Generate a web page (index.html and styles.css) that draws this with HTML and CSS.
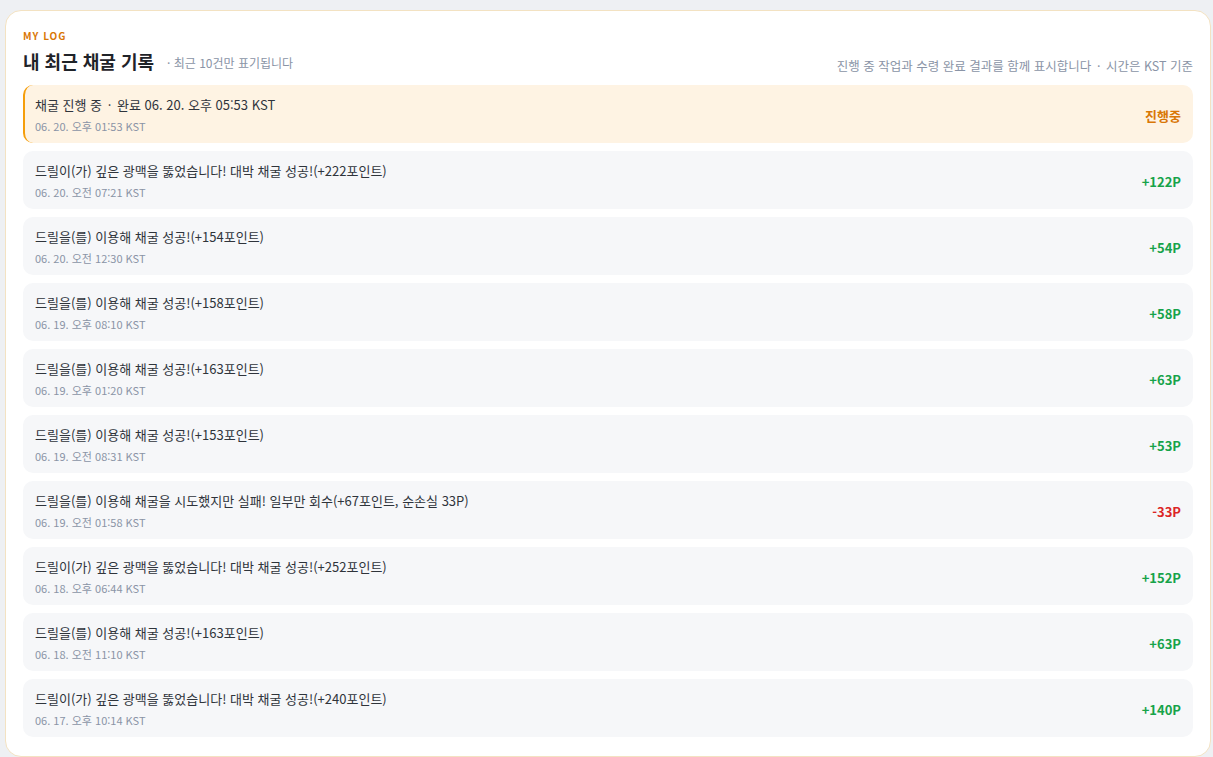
FILE: index.html
```html
<!DOCTYPE html>
<html lang="ko">
<head>
  <meta charset="UTF-8">
  <meta name="viewport" content="width=device-width, initial-scale=1.0">
  <title>내 최근 채굴 기록</title>
  <link rel="stylesheet" href="styles.css">
</head>
<body>
  <section class="log-card">
    <div class="log-eyebrow">MY LOG</div>
    <div class="log-head">
      <div class="log-title-wrap">
        <h2 class="log-title">내 최근 채굴 기록</h2>
        <span class="log-note">· 최근 10건만 표기됩니다</span>
      </div>
      <div class="log-desc">진행 중 작업과 수령 완료 결과를 함께 표시합니다 <span class="dot">·</span> 시간은 KST 기준</div>
    </div>

    <ul class="log-list">
      <li class="log-item active">
        <div class="log-text">
          <div class="log-msg">채굴 진행 중 <span class="dot">·</span> 완료 06. 20. 오후 05:53 KST</div>
          <div class="log-time">06. 20. 오후 01:53 KST</div>
        </div>
        <div class="log-value pending">진행중</div>
      </li>
      <li class="log-item">
        <div class="log-text">
          <div class="log-msg">드릴이(가) 깊은 광맥을 뚫었습니다! 대박 채굴 성공!(+222포인트)</div>
          <div class="log-time">06. 20. 오전 07:21 KST</div>
        </div>
        <div class="log-value plus">+122P</div>
      </li>
      <li class="log-item">
        <div class="log-text">
          <div class="log-msg">드릴을(를) 이용해 채굴 성공!(+154포인트)</div>
          <div class="log-time">06. 20. 오전 12:30 KST</div>
        </div>
        <div class="log-value plus">+54P</div>
      </li>
      <li class="log-item">
        <div class="log-text">
          <div class="log-msg">드릴을(를) 이용해 채굴 성공!(+158포인트)</div>
          <div class="log-time">06. 19. 오후 08:10 KST</div>
        </div>
        <div class="log-value plus">+58P</div>
      </li>
      <li class="log-item">
        <div class="log-text">
          <div class="log-msg">드릴을(를) 이용해 채굴 성공!(+163포인트)</div>
          <div class="log-time">06. 19. 오후 01:20 KST</div>
        </div>
        <div class="log-value plus">+63P</div>
      </li>
      <li class="log-item">
        <div class="log-text">
          <div class="log-msg">드릴을(를) 이용해 채굴 성공!(+153포인트)</div>
          <div class="log-time">06. 19. 오전 08:31 KST</div>
        </div>
        <div class="log-value plus">+53P</div>
      </li>
      <li class="log-item">
        <div class="log-text">
          <div class="log-msg">드릴을(를) 이용해 채굴을 시도했지만 실패! 일부만 회수(+67포인트, 순손실 33P)</div>
          <div class="log-time">06. 19. 오전 01:58 KST</div>
        </div>
        <div class="log-value minus">-33P</div>
      </li>
      <li class="log-item">
        <div class="log-text">
          <div class="log-msg">드릴이(가) 깊은 광맥을 뚫었습니다! 대박 채굴 성공!(+252포인트)</div>
          <div class="log-time">06. 18. 오후 06:44 KST</div>
        </div>
        <div class="log-value plus">+152P</div>
      </li>
      <li class="log-item">
        <div class="log-text">
          <div class="log-msg">드릴을(를) 이용해 채굴 성공!(+163포인트)</div>
          <div class="log-time">06. 18. 오전 11:10 KST</div>
        </div>
        <div class="log-value plus">+63P</div>
      </li>
      <li class="log-item">
        <div class="log-text">
          <div class="log-msg">드릴이(가) 깊은 광맥을 뚫었습니다! 대박 채굴 성공!(+240포인트)</div>
          <div class="log-time">06. 17. 오후 10:14 KST</div>
        </div>
        <div class="log-value plus">+140P</div>
      </li>
    </ul>
  </section>
</body>
</html>
```

FILE: styles.css
```css
body {
  margin: 0;
  padding: 10px 2px 2px 5px;
  background-color: #eef0f3;
  font-family: "Noto Sans CJK KR", "Noto Sans", sans-serif;
  color: #2b2f36;
}

.log-card {
  background-color: #fff;
  border: 1px solid #f3e2c2;
  border-radius: 16px;
  padding: 18px 17px 19px 17px;
}

.log-eyebrow {
  font-size: 10px;
  line-height: 14px;
  font-weight: 700;
  letter-spacing: 1px;
  color: #d97706;
}

.log-head {
  display: flex;
  justify-content: space-between;
  align-items: flex-end;
  margin-top: 5px;
}

.log-title-wrap {
  display: flex;
  align-items: center;
}

.log-title {
  margin: 0;
  font-size: 18px;
  line-height: 26px;
  font-weight: 700;
  color: #1f2329;
}

.log-note {
  margin-left: 13px;
  margin-top: 3px;
  font-size: 12px;
  color: #8a94a6;
}

.log-desc {
  font-size: 12.5px;
  line-height: 17px;
  color: #8a94a6;
}

.dot {
  margin: 0 2px;
}

.log-list {
  list-style: none;
  margin: 11px 0 0;
  padding: 0;
  display: flex;
  flex-direction: column;
  gap: 8px;
}

.log-item {
  display: flex;
  justify-content: space-between;
  align-items: center;
  background-color: #f6f7f9;
  border-radius: 10px;
  padding: 10px 12px 9px;
}

.log-item.active {
  background-color: #fef3e3;
  border-left: 2px solid #f59e0b;
  padding-left: 10px;
}

.log-msg {
  font-size: 13px;
  line-height: 20px;
  color: #2f343b;
}

.log-time {
  margin-top: 3px;
  font-size: 11px;
  line-height: 16px;
  color: #8a94a6;
}

.log-value {
  font-size: 13px;
  font-weight: 700;
  margin-top: 2px;
}

.log-value.plus {
  color: #16a34a;
}

.log-value.minus {
  color: #dc2626;
}

.log-value.pending {
  color: #d97706;
}
```
